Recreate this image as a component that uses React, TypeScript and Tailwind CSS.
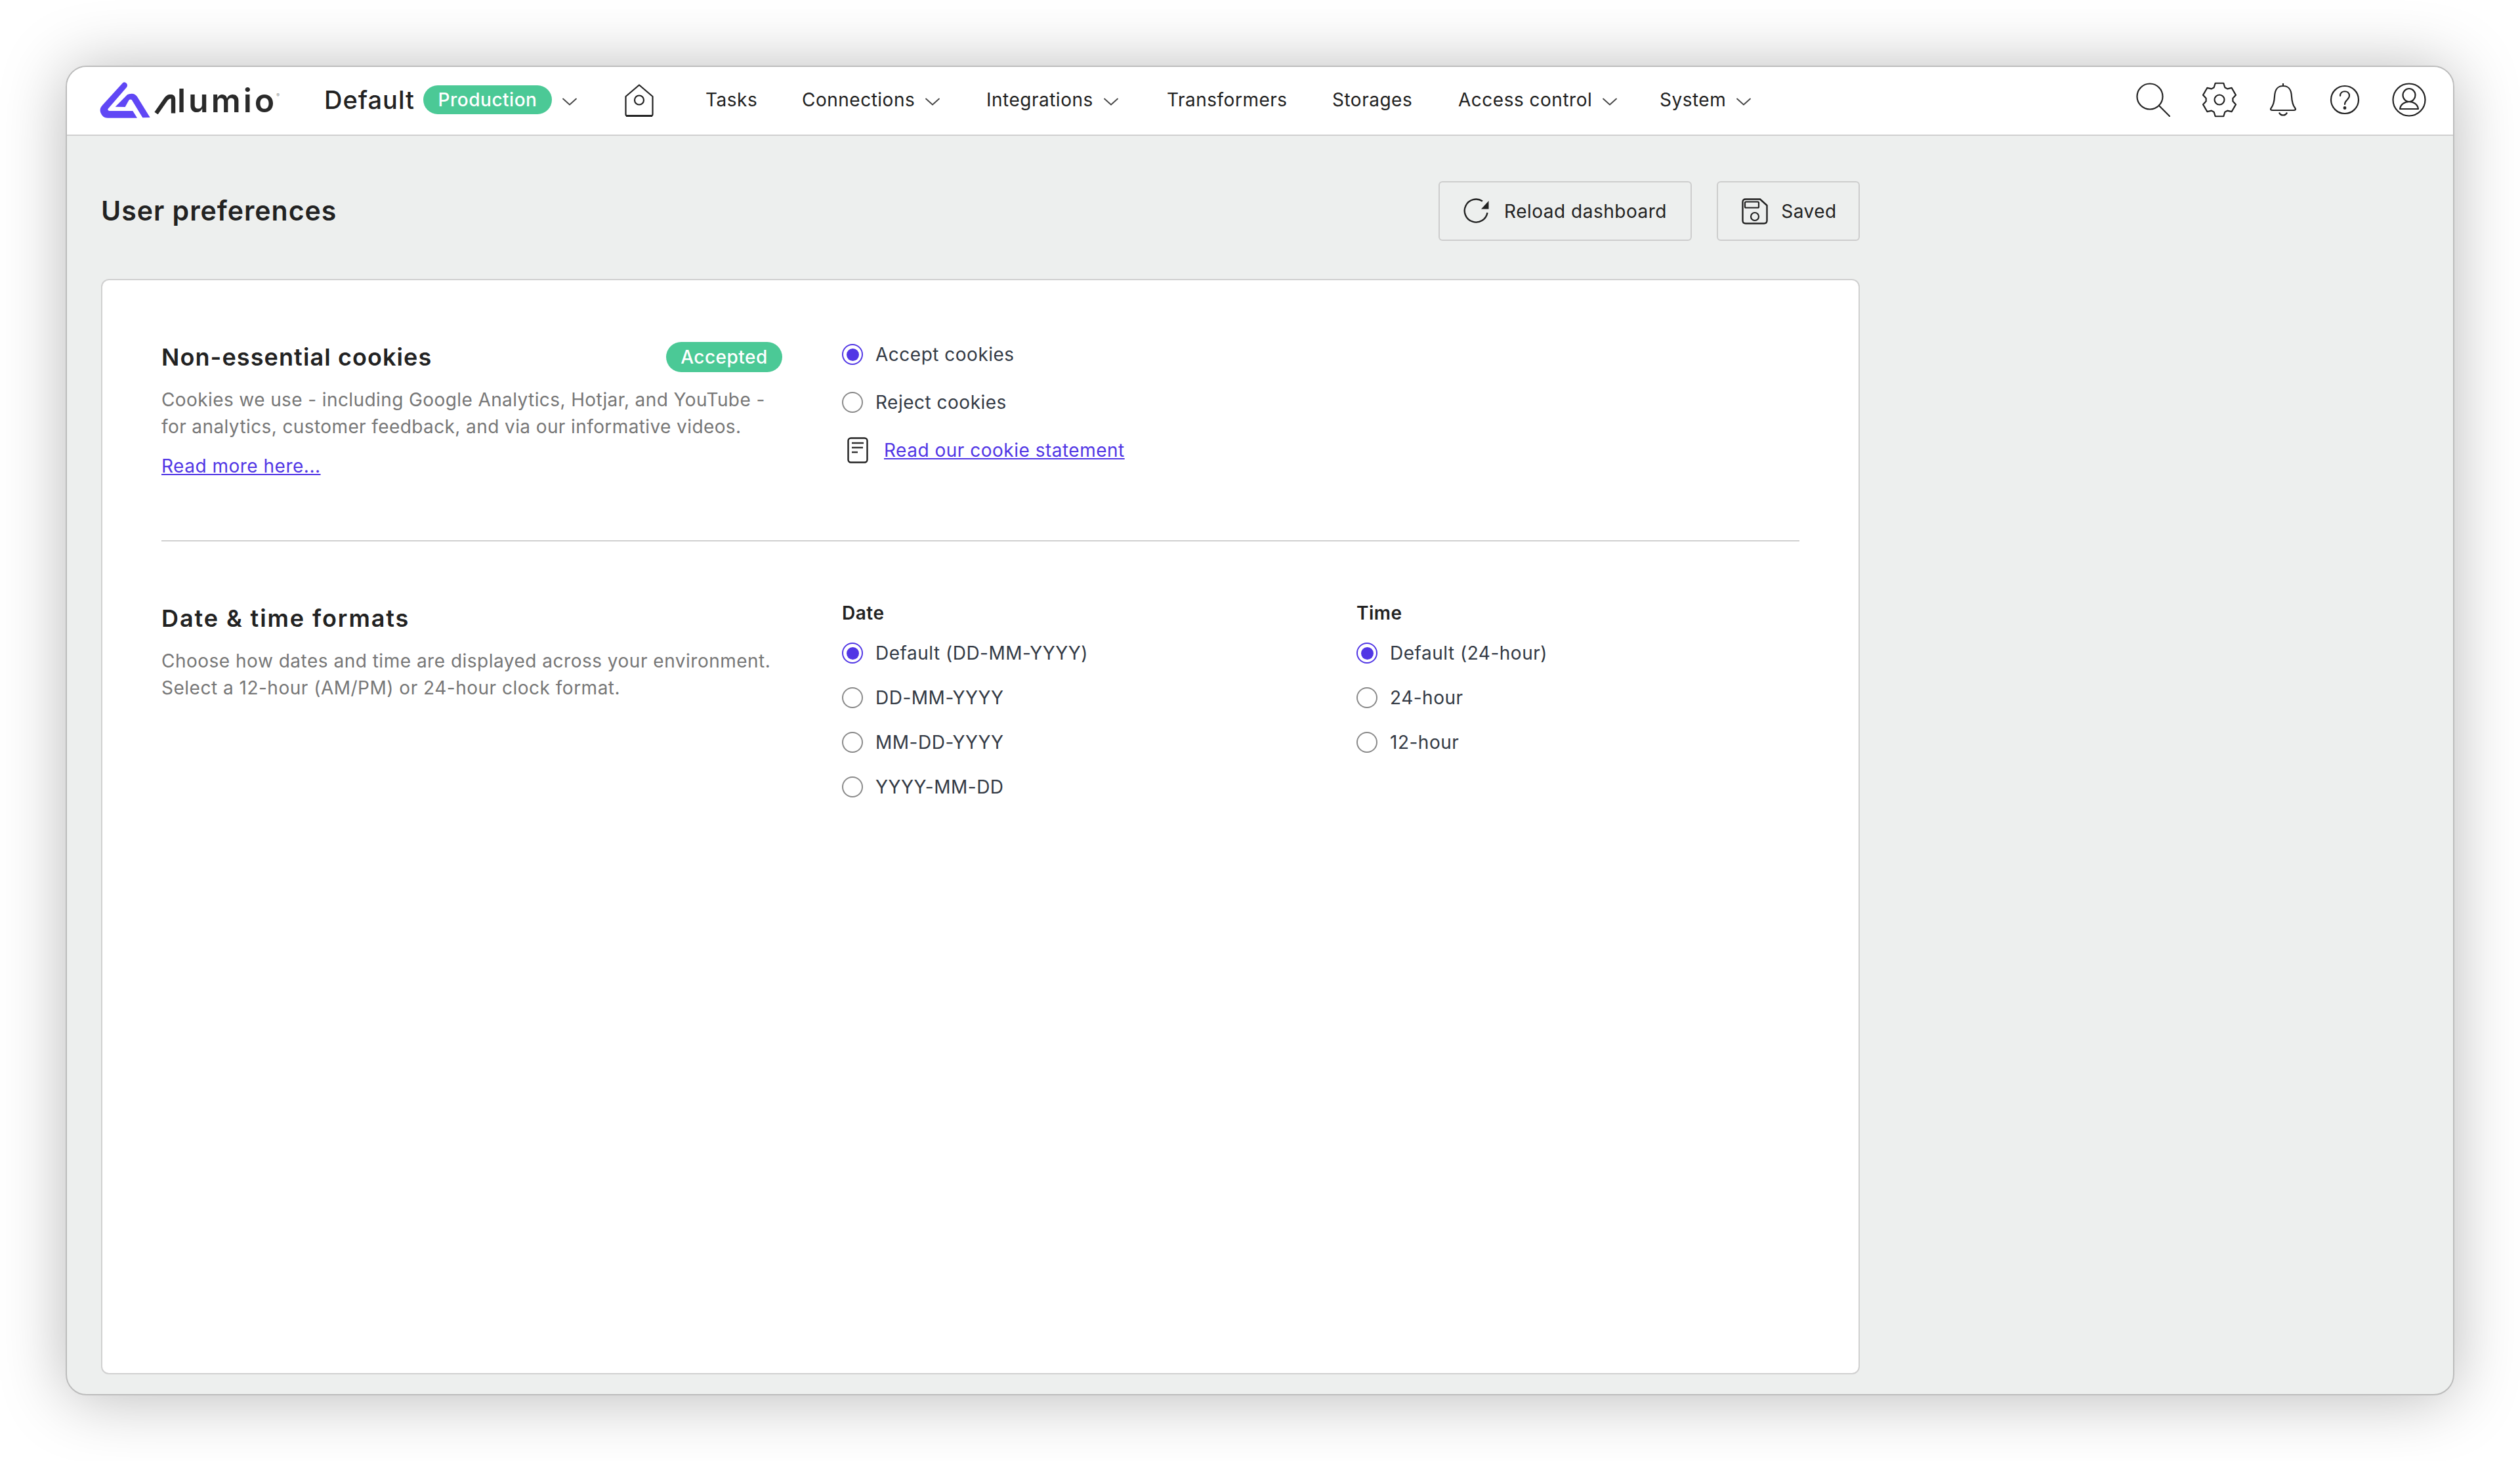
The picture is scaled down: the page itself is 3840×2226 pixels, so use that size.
// 6 tooth cog, same silhouette as the settings icon in the header
const gearPath =
	[0, 1, 2, 3, 4, 5]
		.map((k) => {
			const a = -90 + 60 * k;
			return [
				[20.5, a - 24],
				[26, a - 14],
				[26, a + 14],
				[20.5, a + 24],
			]
				.map(([r, d]) => {
					const t = (d * Math.PI) / 180;
					return `${(27 + r * Math.cos(t)).toFixed(2)} ${(27 + r * Math.sin(t)).toFixed(2)}`;
				})
				.join(" L");
		})
		.map((s, i) => (i === 0 ? "M" : "L") + s)
		.join(" ") + " Z";

function Chevron() {
	return (
		<svg width="24" height="14" viewBox="0 0 24 14" fill="none" className="ml-[15px] mt-[6px] shrink-0">
			<path d="M2 2.5 L12 11.5 L22 2.5" stroke="#444" strokeWidth="1.8" strokeLinecap="round" strokeLinejoin="round" />
		</svg>
	);
}

function Logo() {
	return (
		<div className="flex items-center w-[300px] shrink-0">
			<svg width="77" height="55" viewBox="459 375 231 165" className="shrink-0">
				<path
					d="M565 378 Q574 372 582 382 Q588 390 582 399 L497 497 Q493 505 503 507 L610 507 L630 539 L495 539 Q472 539 463 515 Q456 496 472 480 Z"
					fill="#6047f5"
				/>
				<path
					d="M530 488 L585 433 Q592 428 605 428 Q622 428 630 442 L689 537 L655 538 L605 456 Q598 452 592 458 L575 489 Z"
					fill="#6047f5"
				/>
			</svg>
			<svg width="34" height="30" viewBox="0 0 34 30" className="ml-[6px] mt-[14px] shrink-0">
				<path d="M3 28.5 L18 7 Q21 3 25 3 Q29 3 29 8 V28.5" fill="none" stroke="#2a2a2a" strokeWidth="6.4" strokeLinejoin="round" />
			</svg>
			<span className="ml-[1px] mt-[2px] text-[50px] leading-none font-semibold tracking-[4px] text-[#2a2a2a]">lumio</span>
			<span className="-ml-[1px] -mt-[12px] text-[7px] text-[#888]">®</span>
		</div>
	);
}

function NavItem({ label, width, caret }: { label: string; width: string; caret?: boolean }) {
	return (
		<div className={`flex items-center ${width} text-[28px] text-[#222]`}>
			<span>{label}</span>
			{caret && <Chevron />}
		</div>
	);
}

function Radio({ label, checked }: { label: string; checked?: boolean }) {
	return (
		<label className="flex items-center h-[40px] text-[28px] text-[#333a45]">
			<span
				className={`flex items-center justify-center w-[32px] h-[32px] rounded-full border-2 mr-[19px] ${
					checked ? "border-[#5136e5]" : "border-[#8a8a8a]"
				}`}
			>
				{checked && <span className="w-[19px] h-[19px] rounded-full bg-[#5136e5]" />}
			</span>
			{label}
		</label>
	);
}

export default function App() {
	return (
		<div className="w-[3840px] h-[2226px] bg-white p-[100px] font-['Inter',sans-serif] tracking-[0.5px]">
			<div className="flex flex-col w-[3640px] h-[2026px] rounded-[32px] border-2 border-[#bcbcbc] bg-[#edefee] shadow-[0_4px_100px_rgba(0,0,0,0.28)] overflow-hidden">
				<header className="flex items-center h-[105px] shrink-0 bg-white border-b-2 border-[#cfcfcf] pl-[50px] pr-[40px] pb-[3px]">
					<Logo />
					<div className="flex items-center ml-[42px]">
						<span className="text-[38px] font-medium tracking-[1px] text-[#222] w-[151px]">Default</span>
						<span className="flex items-center justify-center w-[196px] h-[44px] rounded-full bg-[#4bc996] text-[28px] font-medium text-white">
							Production
						</span>
						<Chevron />
					</div>
					<svg width="46" height="50" viewBox="0 0 46 50" fill="none" className="ml-[71px] mt-[1px] shrink-0">
						<path d="M23 1.5 L43.5 19 V46 Q43.5 48.5 41 48.5 H5 Q2.5 48.5 2.5 46 V19 Z" stroke="#222" strokeWidth="2.2" strokeLinejoin="round" />
						<path d="M3 48.5 H43" stroke="#222" strokeWidth="3" />
						<circle cx="23" cy="24.5" r="7" stroke="#222" strokeWidth="2.2" />
					</svg>
					<nav className="flex items-center ml-[78px]">
						<NavItem label="Tasks" width="w-[147px]" />
						<NavItem label="Connections" width="w-[281px]" caret />
						<NavItem label="Integrations" width="w-[275px]" caret />
						<NavItem label="Transformers" width="w-[252px]" />
						<NavItem label="Storages" width="w-[192px]" />
						<NavItem label="Access control" width="w-[307px]" caret />
						<NavItem label="System" width="w-[160px]" caret />
					</nav>
					<div className="flex items-center ml-auto">
						<svg width="52" height="52" viewBox="0 0 52 52" fill="none" className="shrink-0">
							<circle cx="21" cy="21" r="19.5" stroke="#222" strokeWidth="2.2" />
							<path d="M35 35 L51 51" stroke="#222" strokeWidth="2.2" strokeLinecap="round" />
						</svg>
						<svg width="54" height="54" viewBox="0 0 54 54" fill="none" className="ml-[48px] shrink-0">
							<path d={gearPath} stroke="#222" strokeWidth="2.2" strokeLinejoin="round" />
							<circle cx="27" cy="27" r="7.5" stroke="#222" strokeWidth="2.2" />
						</svg>
						<svg width="40" height="54" viewBox="0 0 40 54" fill="none" className="ml-[50px] shrink-0">
							<path
								d="M20 2 V6 M20 6 C10 6 7.5 13 7 22 C6.5 32 4 37 1.5 40 Q0 43 4 43 H36 Q40 43 38.5 40 C36 37 33.5 32 33 22 C32.5 13 30 6 20 6 Z M14 46.5 A 6.5 6.5 0 0 0 26 46.5"
								stroke="#222"
								strokeWidth="2.2"
								strokeLinejoin="round"
							/>
						</svg>
						<svg width="46" height="46" viewBox="0 0 46 46" fill="none" className="ml-[51px] shrink-0">
							<circle cx="23" cy="23" r="21" stroke="#222" strokeWidth="2.2" />
							<path d="M16 17 C16 8 30 8 30 17 C30 23 23 23 23 30" stroke="#222" strokeWidth="2.2" strokeLinecap="round" />
							<circle cx="23" cy="35.5" r="2.4" fill="#222" />
						</svg>
						<svg width="54" height="54" viewBox="0 0 54 54" fill="none" className="ml-[48px] shrink-0">
							<circle cx="27" cy="27" r="24.5" stroke="#222" strokeWidth="2.2" />
							<ellipse cx="27" cy="20" rx="9.5" ry="10" stroke="#222" strokeWidth="2.2" />
							<path d="M13 41 C14 34 20 30 27 30 C34 30 40 34 41 41 Z" stroke="#222" strokeWidth="2.2" strokeLinejoin="round" />
						</svg>
					</div>
				</header>
				<main className="flex flex-col flex-1 w-[2784px] pl-[52px] pr-[52px] pt-[69px] pb-[30px]">
					<div className="flex items-center justify-between h-[91px] shrink-0">
						<h1 className="text-[41px] font-semibold tracking-[1px] text-[#222]">User preferences</h1>
						<div className="flex items-center gap-[38px]">
							<button className="flex items-center justify-center w-[386px] h-[91px] rounded-[6px] border-2 border-[#cdcdcd] text-[28px] text-[#222]">
								<svg width="42" height="42" viewBox="0 0 42 42" fill="none" className="mr-[20px] shrink-0">
									<path d="M29 5.5 A17.5 17.5 0 1 0 36.5 23" stroke="#222" strokeWidth="2.4" />
									<path d="M38.5 5 V17.5 H27 Z" fill="#222" />
								</svg>
								Reload dashboard
							</button>
							<button className="flex items-center justify-center w-[218px] h-[91px] pl-[3px] rounded-[6px] border-2 border-[#cdcdcd] text-[28px] text-[#222]">
								<svg width="40" height="40" viewBox="0 0 40 40" fill="none" className="mr-[20px] shrink-0">
									<path d="M6 1.5 H28 L38.5 11 V34 Q38.5 38.5 34 38.5 H6 Q1.5 38.5 1.5 34 V6 Q1.5 1.5 6 1.5 Z" stroke="#222" strokeWidth="2.4" strokeLinejoin="round" />
									<rect x="5" y="5.5" width="21" height="9" rx="1.5" stroke="#222" strokeWidth="2.2" />
									<circle cx="20" cy="28" r="6" stroke="#222" strokeWidth="2.2" />
								</svg>
								Saved
							</button>
						</div>
					</div>
					<section className="flex-1 mt-[58px] rounded-[12px] border-2 border-[#d0d0d0] bg-white px-[90px] pt-[94px]">
						<div className="flex h-[304px] border-b-2 border-[#cfcfcf]">
							<div className="w-[1037px] shrink-0">
								<div className="flex items-center justify-between w-[946px] h-[46px]">
									<h2 className="text-[36px] font-semibold tracking-[1.1px] text-[#222]">Non-essential cookies</h2>
									<span className="flex items-center justify-center w-[177px] h-[46px] rounded-full bg-[#4bc996] text-[28px] font-medium text-white">
										Accepted
									</span>
								</div>
								<p className="mt-[22px] text-[28px] leading-[41px] tracking-[0.4px] text-[#777]">
									Cookies we use - including Google Analytics, Hotjar, and YouTube -
									<br />
									for analytics, customer feedback, and via our informative videos.
								</p>
								<a href="#" className="block mt-[19px] text-[28px] leading-[41px] text-[#5136e5] underline">
									Read more here...
								</a>
							</div>
							<div className="flex flex-col -mt-[1px] gap-[33px]">
								<Radio label="Accept cookies" checked />
								<Radio label="Reject cookies" />
								<div className="flex items-center h-[40px]">
									<svg width="32" height="40" viewBox="0 0 32 40" fill="none" className="ml-[8px] shrink-0">
										<rect x="1.5" y="1.5" width="29" height="37" rx="4" stroke="#222" strokeWidth="2.4" />
										<path d="M7 9 H25 M7 16 H24 M7 23 H16" stroke="#333" strokeWidth="2.6" />
									</svg>
									<a href="#" className="ml-[24px] text-[28px] text-[#5136e5] underline">
										Read our cookie statement
									</a>
								</div>
							</div>
						</div>
						<div className="flex pt-[92px]">
							<div className="w-[1037px] shrink-0">
								<h2 className="h-[50px] text-[36px] leading-[50px] font-semibold tracking-[1.9px] text-[#222]">Date &amp; time formats</h2>
								<p className="mt-[20px] text-[28px] leading-[41px] text-[#777]">
									Choose how dates and time are displayed across your environment.
									<br />
									Select a 12-hour (AM/PM) or 24-hour clock format.
								</p>
							</div>
							<div className="w-[784px] shrink-0 -mt-[3px]">
								<h3 className="h-[40px] text-[28px] leading-[40px] font-semibold text-[#222]">Date</h3>
								<div className="flex flex-col gap-[28px] mt-[21px]">
									<Radio label="Default (DD-MM-YYYY)" checked />
									<Radio label="DD-MM-YYYY" />
									<Radio label="MM-DD-YYYY" />
									<Radio label="YYYY-MM-DD" />
								</div>
							</div>
							<div className="-mt-[3px]">
								<h3 className="h-[40px] text-[28px] leading-[40px] font-semibold text-[#222]">Time</h3>
								<div className="flex flex-col gap-[28px] mt-[21px]">
									<Radio label="Default (24-hour)" checked />
									<Radio label="24-hour" />
									<Radio label="12-hour" />
								</div>
							</div>
						</div>
					</section>
				</main>
			</div>
		</div>
	);
}
